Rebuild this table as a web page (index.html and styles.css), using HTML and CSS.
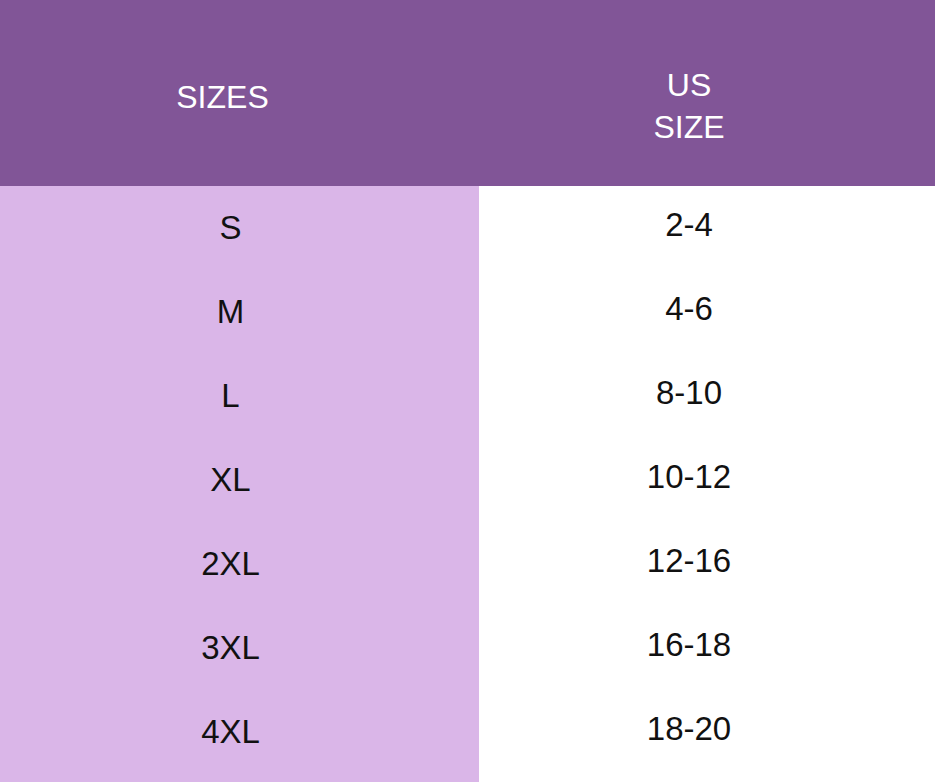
FILE: index.html
```html
<!DOCTYPE html>
<html lang="en">
<head>
<meta charset="utf-8">
<title>Size Chart</title>
<link rel="stylesheet" href="styles.css">
</head>
<body>
<div class="chart">
  <div class="col col-sizes">
    <div class="head"><span>SIZES</span></div>
    <div class="cell">S</div>
    <div class="cell">M</div>
    <div class="cell">L</div>
    <div class="cell">XL</div>
    <div class="cell">2XL</div>
    <div class="cell">3XL</div>
    <div class="cell">4XL</div>
  </div>
  <div class="col col-us">
    <div class="head"><span>US<br>SIZE</span></div>
    <div class="cell">2-4</div>
    <div class="cell">4-6</div>
    <div class="cell">8-10</div>
    <div class="cell">10-12</div>
    <div class="cell">12-16</div>
    <div class="cell">16-18</div>
    <div class="cell">18-20</div>
  </div>
</div>
</body>
</html>
```
FILE: styles.css
```css
html, body {
  margin: 0;
  padding: 0;
  height: 100%;
}
body {
  font-family: "Liberation Sans", Arial, sans-serif;
  background: #ffffff;
}
.chart {
  display: grid;
  grid-template-columns: 479px 1fr;
  height: 782px;
  overflow: hidden;
}
.col {
  display: flex;
  flex-direction: column;
}
.col-sizes {
  background: #dab6e8;
}
.col-us {
  background: #ffffff;
}
.head {
  height: 186px;
  background: #815597;
  color: #ffffff;
  font-size: 32px;
  display: flex;
  align-items: center;
  justify-content: center;
  text-align: center;
  line-height: 42px;
  box-sizing: border-box;
}
.col-sizes .head {
  padding-right: 34px;
  padding-top: 8px;
}
.col-us .head {
  padding-right: 36px;
  padding-top: 26px;
}
.cell {
  height: 84px;
  display: flex;
  align-items: center;
  justify-content: center;
  font-size: 33px;
  color: #111111;
  box-sizing: border-box;
}
.col-sizes .cell {
  padding-right: 18px;
}
.col-us .cell {
  padding-right: 36px;
  padding-bottom: 6px;
}
```
